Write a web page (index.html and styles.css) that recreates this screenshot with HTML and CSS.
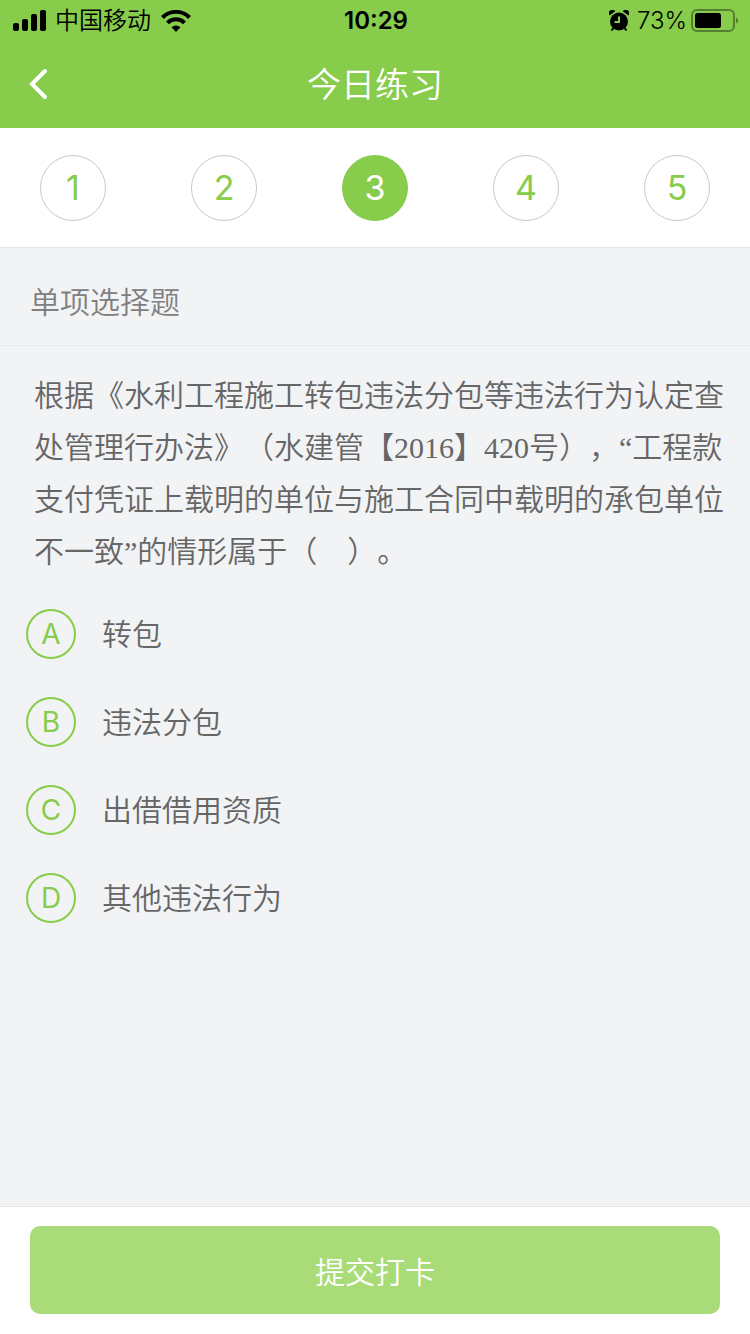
FILE: index.html
```html
<!DOCTYPE html>
<html lang="zh-CN">
  <head>
    <meta charset="UTF-8" />
    <meta name="viewport" content="width=device-width, initial-scale=1.0" />
    <title>今日练习</title>
    <link rel="stylesheet" href="styles.css">
  </head>
  <body>
    <header class="top">
      <div class="status">
        <div class="status-left">
          <svg class="signal" width="34" height="22" viewBox="0 0 34 22">
            <rect x="0" y="13" width="6" height="8" rx="2" />
            <rect x="9" y="9" width="6" height="12" rx="2" />
            <rect x="18" y="4" width="6" height="17" rx="2" />
            <rect x="27" y="0" width="6" height="21" rx="2" />
          </svg>
          <span>中国移动</span>
          <svg class="wifi" width="30" height="22" viewBox="0 0 30 22">
            <path d="M1.5 7.5a19 19 0 0 1 27 0" />
            <path d="M6.5 12.8a12 12 0 0 1 17 0" />
            <path class="dot" d="M10.5 17.3a6.5 6.5 0 0 1 9 0L15 22z" />
          </svg>
        </div>
        <time class="clock">10:29</time>
        <div class="status-right">
          <svg class="alarm" width="20" height="22" viewBox="0 0 20 22">
            <path d="M.5 5.6A3.6 3.6 0 0 1 6.2 1.2z" />
            <path d="M19.5 5.6A3.6 3.6 0 0 0 13.8 1.2z" />
            <circle cx="10" cy="11.5" r="9" />
            <path class="foot" d="M4.5 18l-2 2.5M15.5 18l2 2.5" />
            <path class="hands" d="M10 6.5V12H5.5" />
          </svg>
          <span>73%</span>
          <svg class="battery" width="48" height="24" viewBox="0 0 48 24">
            <rect class="shell" x="1" y="1" width="42" height="21" rx="5" />
            <rect x="4" y="4" width="26" height="15" rx="2.5" />
            <path class="cap" d="M45 8.5c3 1 3 5 0 6z" />
          </svg>
        </div>
      </div>
      <nav class="nav">
        <a class="back" href="#" aria-label="返回">
          <svg width="20" height="32" viewBox="0 0 20 32">
            <path d="M17 3 4 16l13 13" />
          </svg>
        </a>
        <h1>今日练习</h1>
      </nav>
    </header>

    <div class="steps">
      <button class="step" type="button">1</button>
      <button class="step" type="button">2</button>
      <button class="step active" type="button">3</button>
      <button class="step" type="button">4</button>
      <button class="step" type="button">5</button>
    </div>

    <form class="quiz">
      <main class="content">
        <h2 class="type">单项选择题</h2>
        <p class="question">根据《水利工程施工转包违法分包等违法行为认定查处管理行办法》（水建管【2016】420号），“工程款支付凭证上载明的单位与施工合同中载明的承包单位不一致”的情形属于（　）。</p>
        <div class="options">
          <label class="option">
            <span class="mark"><input type="radio" name="answer" value="A"><span>A</span></span>
            <span>转包</span>
          </label>
          <label class="option">
            <span class="mark"><input type="radio" name="answer" value="B"><span>B</span></span>
            <span>违法分包</span>
          </label>
          <label class="option">
            <span class="mark"><input type="radio" name="answer" value="C"><span>C</span></span>
            <span>出借借用资质</span>
          </label>
          <label class="option">
            <span class="mark"><input type="radio" name="answer" value="D"><span>D</span></span>
            <span>其他违法行为</span>
          </label>
        </div>
      </main>
      <footer class="footer">
        <button class="submit" type="submit">提交打卡</button>
      </footer>
    </form>
  </body>
</html>
```
FILE: styles.css
```css
*{
    margin: 0;
    padding: 0;
    box-sizing: border-box;
}
body{
    display: flex;
    flex-direction: column;
    min-height: 100vh;
    background: #f2f3f5;
    color: #666;
    font-family: Inter, "Noto Sans CJK SC", sans-serif;
    font-size: 30px;
    font-weight: 350;
    text-spacing-trim: space-all;
}
button{
    border: none;
    font: inherit;
    cursor: pointer;
}
.top{
    background: #87cc4b;
}
.status{
    display: grid;
    grid-template-columns: 1fr auto 1fr;
    align-items: center;
    height: 40px;
    padding: 0 11px 0 13px;
    color: #000;
    font-size: 24px;
    line-height: 42px;
}
.status-left,
.status-right{
    display: flex;
    align-items: center;
}
.status-left{
    gap: 8px;
}
.status-right{
    justify-content: flex-end;
    gap: 4px;
}
.clock{
    font-weight: 600;
}
.wifi{
    margin-left: 2px;
    fill: none;
    stroke: #000;
    stroke-width: 4;
}
.wifi .dot{
    fill: #000;
    stroke: none;
}
.alarm{
    margin-right: 4px;
}
.alarm .foot{
    stroke: #000;
    stroke-width: 2;
}
.alarm .hands{
    fill: none;
    stroke: #87cc4b;
    stroke-width: 2;
}
.battery .shell{
    fill: none;
    stroke: #55812f;
    stroke-width: 2;
}
.battery .cap{
    fill: #55812f;
}
.nav{
    display: grid;
    grid-template-columns: 60px 1fr 60px;
    align-items: center;
    height: 88px;
    color: #fff;
}
.nav h1{
    padding-top: 2px;
    font-size: 34px;
    font-weight: 350;
    line-height: 48px;
    text-align: center;
}
.back{
    display: flex;
    padding-left: 28px;
}
.back path{
    fill: none;
    stroke: #fff;
    stroke-width: 4;
    stroke-linecap: round;
}
.steps{
    display: flex;
    justify-content: space-between;
    align-items: center;
    height: 120px;
    padding: 0 40px;
    background: #fff;
    border-bottom: 1px solid #e5e6e8;
}
.step{
    width: 66px;
    height: 66px;
    background: #fff;
    border: 1px solid #c8c8c8;
    border-radius: 50%;
    color: #87cc4b;
    font-size: 34px;
    font-weight: 400;
}
.step.active{
    background: #87cc4b;
    border-color: #87cc4b;
    color: #fff;
}
.quiz{
    display: flex;
    flex: 1;
    flex-direction: column;
}
.content{
    flex: 1;
}
.type{
    padding: 32px 30px 20px;
    border-bottom: 1px solid #e8e9eb;
    color: #808080;
    font-size: 30px;
    font-weight: 350;
    line-height: 45px;
}
.question{
    padding: 24px 26px 0 34px;
    font-family: "Liberation Serif", "Noto Sans CJK SC", serif;
    line-height: 52px;
}
.options{
    display: flex;
    flex-direction: column;
    gap: 38px;
    padding: 31px 26px;
}
.option{
    display: flex;
    align-items: center;
    gap: 26px;
    line-height: 50px;
    cursor: pointer;
}
.mark{
    display: grid;
    width: 50px;
    height: 50px;
    color: #87cc4b;
    font-size: 28px;
    font-weight: 400;
    text-align: center;
}
/* circle and letter share one grid cell */
.mark > *{
    grid-area: 1 / 1;
}
.mark input{
    appearance: none;
    border: 2px solid #87cc4b;
    border-radius: 50%;
}
.mark input:checked{
    background: #87cc4b;
}
.mark input:checked + span{
    color: #fff;
}
.footer{
    padding: 19px 30px 20px;
    background: #fff;
    border-top: 1px solid #e5e6e8;
}
.submit{
    display: block;
    width: 100%;
    height: 88px;
    background: #a9dc79;
    border-radius: 10px;
    color: #fff;
}
```
